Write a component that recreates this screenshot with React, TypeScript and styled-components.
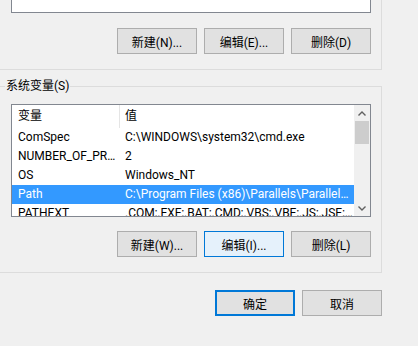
import React from 'react';
import styled, { createGlobalStyle } from 'styled-components';

const GlobalStyle = createGlobalStyle`
  html, body {
    margin: 0;
    padding: 0;
    background: #f0f0f0;
  }
  body {
    font-family: "Segoe UI", Roboto, "Noto Sans CJK SC", sans-serif;
    font-size: 12px;
    color: #000;
  }
`;

const Page = styled.div`
  width: 418px;
  height: 346px;
  overflow: hidden;
  background: #f0f0f0;
`;

const Dialog = styled.div`
  width: 384px;
  margin: -20px 0 0 -2px;
`;

const Group = styled.div`
  border: 1px solid #dcdcdc;
  padding: 0 10px 15px 12px;
`;

const SysGroup = styled.fieldset`
  margin: 8px 0 0;
  border: 1px solid #dcdcdc;
  padding: 10px 10px 15px 12px;
  min-width: 0;
`;

const Legend = styled.legend`
  margin-left: -6px;
  padding: 0 1px;
  font-size: 12px;
  line-height: 16px;
`;

const EmptyList = styled.div`
  height: 32px;
  background: #fff;
  border: 1px solid #828790;
  box-sizing: border-box;
`;

const ListBox = styled.div`
  display: flex;
  height: 113px;
  background: #fff;
  border: 1px solid #828790;
  box-sizing: border-box;
`;

const ListBody = styled.div`
  flex: 1;
  min-width: 0;
  overflow: hidden;
`;

const Header = styled.div`
  display: grid;
  grid-template-columns: 108px 1fr;
  height: 23px;
  line-height: 23px;
`;

const HeaderCell = styled.div<{ $divider?: boolean }>`
  padding-left: ${({ $divider }) => ($divider ? '6px' : '5px')};
  border-right: ${({ $divider }) => ($divider ? '1px solid #e5e5e5' : 'none')};
`;

const Row = styled.div<{ $selected?: boolean }>`
  display: grid;
  grid-template-columns: 108px 1fr;
  height: 19px;
  line-height: 19px;
  background: ${({ $selected }) => ($selected ? '#3399ff' : 'transparent')};
  color: ${({ $selected }) => ($selected ? '#fff' : '#000')};
`;

const Cell = styled.div<{ $first?: boolean }>`
  padding: ${({ $first }) => ($first ? '0 4px 0 6px' : '0 1px 0 5px')};
  white-space: nowrap;
  overflow: hidden;
  text-overflow: ellipsis;
`;

const ScrollBar = styled.div`
  width: 16px;
  display: flex;
  flex-direction: column;
  background: #f0f0f0;
`;

const ScrollArrow = styled.div`
  height: 16px;
  display: flex;
  align-items: center;
  justify-content: center;
`;

const Thumb = styled.div`
  height: 23px;
  margin: 0 1px;
  background: #cdcdcd;
`;

const Track = styled.div`
  flex: 1;
`;

const ButtonRow = styled.div<{ $top: number }>`
  display: flex;
  justify-content: flex-end;
  gap: 7px;
  margin-top: ${({ $top }) => $top}px;
`;

type Variant = 'normal' | 'hover' | 'default';

const Button = styled.button<{ $variant?: Variant }>`
  width: 80px;
  height: 26px;
  margin: 0;
  padding: 0;
  box-sizing: border-box;
  font-family: inherit;
  font-size: 12px;
  color: #000;
  background: ${({ $variant }) => ($variant === 'hover' ? '#e5f1fb' : '#e1e1e1')};
  border: ${({ $variant }) =>
    $variant === 'default'
      ? '2px solid #0078d7'
      : $variant === 'hover'
      ? '1px solid #0078d7'
      : '1px solid #adadad'};
`;

const Chevron = ({ up }: { up?: boolean }) => (
  <svg width="8" height="5" viewBox="0 0 8 5">
    <polyline
      points={up ? '0.5,4.5 4,1 7.5,4.5' : '0.5,0.5 4,4 7.5,0.5'}
      fill="none"
      stroke="#606060"
      strokeWidth="1.4"
    />
  </svg>
);

const rows = [
  { name: 'ComSpec', value: 'C:\\WINDOWS\\system32\\cmd.exe' },
  { name: 'NUMBER_OF_PROCESSORS', value: '2' },
  { name: 'OS', value: 'Windows_NT' },
  {
    name: 'Path',
    value: 'C:\\Program Files (x86)\\Parallels\\Parallels Tools\\Applications;C:\\WINDOWS\\system32',
    selected: true,
  },
  { name: 'PATHEXT', value: '.COM;.EXE;.BAT;.CMD;.VBS;.VBE;.JS;.JSE;.WSF;.WSH;.MSC' },
];

const App: React.FC = () => {
  return (
    <>
      <GlobalStyle />
      <Page>
        <Dialog>
          <Group>
            <EmptyList />
            <ButtonRow $top={15}>
              <Button>新建(N)...</Button>
              <Button>编辑(E)...</Button>
              <Button>删除(D)</Button>
            </ButtonRow>
          </Group>

          <SysGroup>
            <Legend>系统变量(S)</Legend>
            <ListBox>
              <ListBody>
                <Header>
                  <HeaderCell $divider>变量</HeaderCell>
                  <HeaderCell>值</HeaderCell>
                </Header>
                {rows.map((r) => (
                  <Row key={r.name} $selected={r.selected}>
                    <Cell $first>{r.name}</Cell>
                    <Cell>{r.value}</Cell>
                  </Row>
                ))}
              </ListBody>
              <ScrollBar>
                <ScrollArrow>
                  <Chevron up />
                </ScrollArrow>
                <Thumb />
                <Track />
                <ScrollArrow>
                  <Chevron />
                </ScrollArrow>
              </ScrollBar>
            </ListBox>
            <ButtonRow $top={14}>
              <Button>新建(W)...</Button>
              <Button $variant="hover">编辑(I)...</Button>
              <Button>删除(L)</Button>
            </ButtonRow>
          </SysGroup>

          <ButtonRow $top={17}>
            <Button $variant="default">确定</Button>
            <Button>取消</Button>
          </ButtonRow>
        </Dialog>
      </Page>
    </>
  );
};

export default App;
